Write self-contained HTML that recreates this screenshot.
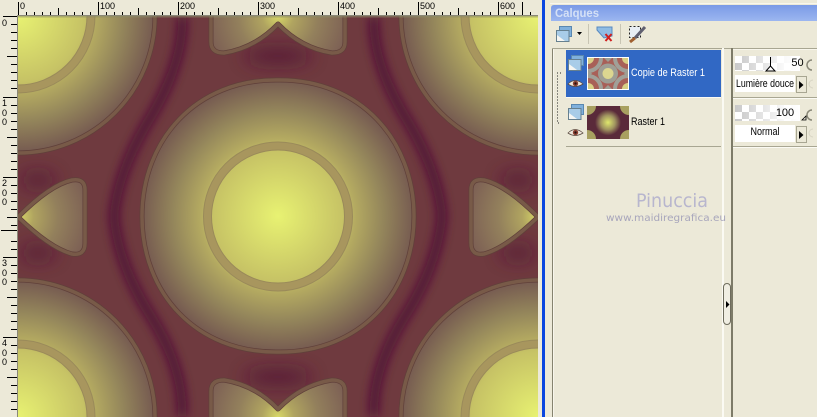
<!DOCTYPE html>
<html><head><meta charset="utf-8"><style>
html,body{margin:0;padding:0;background:#ece9d8;width:817px;height:417px;overflow:hidden}
svg{display:block;overflow:hidden}
text{font-family:"Liberation Sans",sans-serif}
.wm{font-family:"DejaVu Sans",sans-serif}
.c1{fill:none;stroke:#60403a;stroke-width:5;stroke-linejoin:round}
.c2{fill:none;stroke:#785a48;stroke-width:3.500;stroke-linejoin:round}
.r1{fill:none;stroke:#9a8a5a;stroke-width:9}
.r2{fill:none;stroke:#a8965e;stroke-width:7}
</style></head><body>
<svg width="817" height="417" viewBox="0 0 817 417" xmlns="http://www.w3.org/2000/svg">
<defs>
<clipPath id="cv"><rect x="18" y="16" width="520" height="401"/></clipPath>
<filter id="b6" x="-30%" y="-30%" width="160%" height="160%"><feGaussianBlur stdDeviation="5"/></filter>
<filter id="b10" x="-80%" y="-150%" width="260%" height="400%"><feGaussianBlur stdDeviation="9"/></filter>
<radialGradient id="gc" gradientUnits="userSpaceOnUse" cx="278" cy="216" r="138">
<stop offset="0" stop-color="#e8f272"/><stop offset=".48" stop-color="#c6c265"/><stop offset=".56" stop-color="#b4aa61"/><stop offset=".76" stop-color="#94865b"/><stop offset="1" stop-color="#745850"/></radialGradient>
<radialGradient id="g1" gradientUnits="userSpaceOnUse" cx="18" cy="16" r="138"><stop offset="0" stop-color="#e8f272"/><stop offset=".48" stop-color="#c6c265"/><stop offset=".56" stop-color="#b4aa61"/><stop offset=".76" stop-color="#94865b"/><stop offset="1" stop-color="#745850"/></radialGradient>
<radialGradient id="g2" gradientUnits="userSpaceOnUse" cx="538" cy="16" r="138"><stop offset="0" stop-color="#e8f272"/><stop offset=".48" stop-color="#c6c265"/><stop offset=".56" stop-color="#b4aa61"/><stop offset=".76" stop-color="#94865b"/><stop offset="1" stop-color="#745850"/></radialGradient>
<radialGradient id="g3" gradientUnits="userSpaceOnUse" cx="18" cy="417" r="138"><stop offset="0" stop-color="#e8f272"/><stop offset=".48" stop-color="#c6c265"/><stop offset=".56" stop-color="#b4aa61"/><stop offset=".76" stop-color="#94865b"/><stop offset="1" stop-color="#745850"/></radialGradient>
<radialGradient id="g4" gradientUnits="userSpaceOnUse" cx="538" cy="417" r="138"><stop offset="0" stop-color="#e8f272"/><stop offset=".48" stop-color="#c6c265"/><stop offset=".56" stop-color="#b4aa61"/><stop offset=".76" stop-color="#94865b"/><stop offset="1" stop-color="#745850"/></radialGradient>
<radialGradient id="gt" gradientUnits="userSpaceOnUse" cx="278" cy="16" r="72"><stop offset="0" stop-color="#d8d868"/><stop offset=".22" stop-color="#b0a460"/><stop offset=".55" stop-color="#93805c"/><stop offset="1" stop-color="#7c5f54"/></radialGradient>
<radialGradient id="gb" gradientUnits="userSpaceOnUse" cx="278" cy="417" r="72"><stop offset="0" stop-color="#d8d868"/><stop offset=".22" stop-color="#b0a460"/><stop offset=".55" stop-color="#93805c"/><stop offset="1" stop-color="#7c5f54"/></radialGradient>
<radialGradient id="gl" gradientUnits="userSpaceOnUse" cx="18" cy="216.500" r="72"><stop offset="0" stop-color="#d8d868"/><stop offset=".22" stop-color="#b0a460"/><stop offset=".55" stop-color="#93805c"/><stop offset="1" stop-color="#7c5f54"/></radialGradient>
<radialGradient id="gr" gradientUnits="userSpaceOnUse" cx="538" cy="216.500" r="72"><stop offset="0" stop-color="#d8d868"/><stop offset=".22" stop-color="#b0a460"/><stop offset=".55" stop-color="#93805c"/><stop offset="1" stop-color="#7c5f54"/></radialGradient>
<radialGradient id="t2c" cx=".5" cy=".5" r=".5"><stop offset="0" stop-color="#dfe86c"/><stop offset=".55" stop-color="#a09460"/><stop offset="1" stop-color="#5a2a3a"/></radialGradient>
<linearGradient id="tb" x1="0" y1="0" x2="0" y2="1"><stop offset="0" stop-color="#7a9ae6"/><stop offset="1" stop-color="#9cb6f0"/></linearGradient>
<pattern id="ck" width="14" height="14" patternUnits="userSpaceOnUse"><rect width="14" height="14" fill="#fff"/><rect width="7" height="7" fill="#c8c8c8"/><rect x="7" y="7" width="7" height="7" fill="#c8c8c8"/></pattern>
<linearGradient id="fade" x1="0" y1="0" x2="1" y2="0"><stop offset="0" stop-color="#fff" stop-opacity="0"/><stop offset=".75" stop-color="#fff" stop-opacity=".9"/><stop offset="1" stop-color="#fff"/></linearGradient>
<g id="layerico"><rect x="3.500" y=".5" width="12" height="10" fill="#7fb0dc" stroke="#5a88b0"/><rect x=".5" y="4.500" width="12.500" height="11" fill="#a8cce8" stroke="#66808f"/><path d="M1 9 L9 15 L1 15Z" fill="#f6f6f2"/></g>
<g id="eye"><path d="M0 4 Q7 -3 15 4 Q7 9 0 4Z" fill="#efe8dc" stroke="#5a4a40" stroke-width=".8"/><circle cx="7.500" cy="3.500" r="2.700" fill="#8a4030"/><circle cx="7.500" cy="3.500" r="1.100" fill="#201010"/></g>
<g id="arrow"><path d="M0 0 L4.500 4 L0 8Z" fill="#000"/></g>
</defs>

<!-- rulers -->
<rect width="817" height="417" fill="#ece9d8"/>
<g stroke="#000" stroke-width="1" shape-rendering="crispEdges">
<path d="M18.500 2V15M98.500 2V15M178.500 2V15M258.500 2V15M338.500 2V15M418.500 2V15M498.500 2V15M522.500 2V15"/>
<path d="M26.500 12V15M34.500 12V15M42.500 12V15M50.500 12V15M58.500 8V15M66.500 12V15M74.500 12V15M82.500 12V15M90.500 12V15M106.500 12V15M114.500 12V15M122.500 12V15M130.500 12V15M138.500 8V15M146.500 12V15M154.500 12V15M162.500 12V15M170.500 12V15M186.500 12V15M194.500 12V15M202.500 12V15M210.500 12V15M218.500 8V15M226.500 12V15M234.500 12V15M242.500 12V15M250.500 12V15M266.500 12V15M274.500 12V15M282.500 12V15M290.500 12V15M298.500 8V15M306.500 12V15M314.500 12V15M322.500 12V15M330.500 12V15M346.500 12V15M354.500 12V15M362.500 12V15M370.500 12V15M378.500 8V15M386.500 12V15M394.500 12V15M402.500 12V15M410.500 12V15M426.500 12V15M434.500 12V15M442.500 12V15M450.500 12V15M458.500 8V15M466.500 12V15M474.500 12V15M482.500 12V15M490.500 12V15M506.500 12V15M514.500 12V15M530.500 12V15"/>
<path d="M3 16.500H17M3 97.500H17M3 177.500H17M3 257.500H17M3 337.500H17M1 230.500H17"/>
<path d="M11 24.500H17M11 32.500H17M11 40.500H17M11 48.500H17M7 56.500H17M11 64.500H17M11 72.500H17M11 80.500H17M11 88.500H17M11 105.500H17M11 113.500H17M11 121.500H17M11 129.500H17M7 137.500H17M11 145.500H17M11 153.500H17M11 161.500H17M11 169.500H17M11 185.500H17M11 193.500H17M11 201.500H17M11 209.500H17M7 217.500H17M11 225.500H17M11 241.500H17M11 249.500H17M11 265.500H17M11 273.500H17M11 281.500H17M11 289.500H17M7 297.500H17M11 305.500H17M11 313.500H17M11 321.500H17M11 329.500H17M11 345.500H17M11 353.500H17M11 361.500H17M11 369.500H17M7 377.500H17M11 385.500H17M11 393.500H17M11 401.500H17M11 409.500H17"/>
</g>
<g font-size="9" fill="#000">
<text x="20" y="9">0</text><text x="100" y="9">100</text><text x="180" y="9">200</text><text x="260" y="9">300</text><text x="340" y="9">400</text><text x="420" y="9">500</text><text x="500" y="9">600</text>
<text x="2" y="26">0</text>
<text x="2" y="106">1</text><text x="2" y="116">0</text><text x="2" y="125">0</text>
<text x="2" y="186">2</text><text x="2" y="196">0</text><text x="2" y="205">0</text>
<text x="2" y="266">3</text><text x="2" y="276">0</text><text x="2" y="285">0</text>
<text x="2" y="346">4</text><text x="2" y="356">0</text><text x="2" y="365">0</text>
</g>
<rect x="17" y="15" width="521" height="1" fill="#8a8878"/><rect x="17" y="15" width="1" height="402" fill="#8a8878"/>

<!-- canvas -->
<g clip-path="url(#cv)">
<rect x="18" y="16" width="520" height="401" fill="#6f3a3f"/>
<g fill="none" stroke="#4e1034" stroke-width="9" filter="url(#b6)">
<path d="M182 17 Q184 60 152 115 Q118 170 114 216 Q118 265 152 318 Q184 370 182 416"/>
<path d="M374 17 Q372 60 404 115 Q438 170 442 216 Q438 265 404 318 Q372 370 374 416"/>
</g>
<g fill="#521636" filter="url(#b10)" opacity=".85">
<ellipse cx="278" cy="56" rx="34" ry="8"/><ellipse cx="278" cy="377" rx="34" ry="8"/>
<ellipse cx="38" cy="180" rx="18" ry="7"/><ellipse cx="38" cy="253" rx="18" ry="7"/>
<ellipse cx="518" cy="180" rx="18" ry="7"/><ellipse cx="518" cy="253" rx="18" ry="7"/>
</g>
<!-- centre -->
<path d="M278 80C360 79 414 140 414 216.500C414 293 360 353 278 352C196 353 142 293 142 216.500C142 140 196 79 278 80Z" fill="url(#gc)"/>
<path class="c1" d="M278 80C360 79 414 140 414 216.500C414 293 360 353 278 352C196 353 142 293 142 216.500C142 140 196 79 278 80Z"/>
<path class="c2" d="M278 80C360 79 414 140 414 216.500C414 293 360 353 278 352C196 353 142 293 142 216.500C142 140 196 79 278 80Z"/>
<!-- corners -->
<path d="M155 16A137 137 0 0 1 18 153L18 16Z" fill="url(#g1)"/>
<path d="M401 16A137 137 0 0 0 538 153L538 16Z" fill="url(#g2)"/>
<path d="M155 417A137 137 0 0 0 18 280L18 417Z" fill="url(#g3)"/>
<path d="M401 417A137 137 0 0 1 538 280L538 417Z" fill="url(#g4)"/>
<path class="c1" d="M155 16A137 137 0 0 1 18 153"/><path class="c1" d="M401 16A137 137 0 0 0 538 153"/><path class="c1" d="M155 417A137 137 0 0 0 18 280"/><path class="c1" d="M401 417A137 137 0 0 1 538 280"/>
<path class="c2" d="M155 16A137 137 0 0 1 18 153"/><path class="c2" d="M401 16A137 137 0 0 0 538 153"/><path class="c2" d="M155 417A137 137 0 0 0 18 280"/><path class="c2" d="M401 417A137 137 0 0 1 538 280"/>
<!-- top / bottom -->
<path d="M211 16L211 42Q211 53 224 53Q255 48 278 24Q301 48 332 53Q345 53 345 42L345 16Z" fill="url(#gt)"/>
<path class="c1" d="M211 16L211 42Q211 53 224 53Q255 48 278 24Q301 48 332 53Q345 53 345 42L345 16"/>
<path class="c2" d="M211 16L211 42Q211 53 224 53Q255 48 278 24Q301 48 332 53Q345 53 345 42L345 16"/>
<path d="M211 417L211 391Q211 380 224 380Q255 385 278 409Q301 385 332 380Q345 380 345 391L345 417Z" fill="url(#gb)"/>
<path class="c1" d="M211 417L211 391Q211 380 224 380Q255 385 278 409Q301 385 332 380Q345 380 345 391L345 417"/>
<path class="c2" d="M211 417L211 391Q211 380 224 380Q255 385 278 409Q301 385 332 380Q345 380 345 391L345 417"/>
<!-- left / right -->
<path d="M18 217Q50 185 72 180Q85 178 85 190L85 243Q85 256 72 254Q50 248 18 217Z" fill="url(#gl)"/>
<path class="c1" d="M18 217Q50 185 72 180Q85 178 85 190L85 243Q85 256 72 254Q50 248 18 217"/>
<path class="c2" d="M18 217Q50 185 72 180Q85 178 85 190L85 243Q85 256 72 254Q50 248 18 217"/>
<path d="M538 217Q506 185 484 180Q471 178 471 190L471 243Q471 256 484 254Q506 248 538 217Z" fill="url(#gr)"/>
<path class="c1" d="M538 217Q506 185 484 180Q471 178 471 190L471 243Q471 256 484 254Q506 248 538 217"/>
<path class="c2" d="M538 217Q506 185 484 180Q471 178 471 190L471 243Q471 256 484 254Q506 248 538 217"/>
<!-- rings -->
<circle class="r1" cx="278" cy="216.500" r="70.500"/><circle class="r2" cx="278" cy="216.500" r="70.500"/>
<path class="r1" d="M91 16A73 73 0 0 1 18 89"/><path class="r2" d="M91 16A73 73 0 0 1 18 89"/>
<path class="r1" d="M465 16A73 73 0 0 0 538 89"/><path class="r2" d="M465 16A73 73 0 0 0 538 89"/>
<path class="r1" d="M91 417A73 73 0 0 0 18 344"/><path class="r2" d="M91 417A73 73 0 0 0 18 344"/>
<path class="r1" d="M465 417A73 73 0 0 1 538 344"/><path class="r2" d="M465 417A73 73 0 0 1 538 344"/>
<rect x="18" y="16" width="520" height="1.500" fill="#8a8a68" opacity=".55"/>
</g>

<!-- right side -->
<rect x="538" y="0" width="4" height="417" fill="#ece9d8"/>
<rect x="542" y="0" width="3" height="417" fill="#0a46e0"/>
<rect x="545" y="0" width="272" height="417" fill="#ece9d8"/>
<rect x="550" y="3" width="267" height="1" fill="#f8f6ec"/>
<path d="M551 21V8Q551 5 554 5H817V21Z" fill="url(#tb)"/>
<text x="555" y="17" font-size="11.500" font-weight="bold" fill="#d4e0f6" textLength="44" lengthAdjust="spacingAndGlyphs">Calques</text>

<!-- toolbar -->
<use href="#layerico" x="556" y="26"/>
<path d="M577 32h5l-2.500 3z" fill="#000"/>
<rect x="588" y="24" width="1" height="20" fill="#c8c5b4"/>
<rect x="620" y="24" width="1" height="20" fill="#c8c5b4"/>
<path d="M597 27H612V36L604 38L597 30Z" fill="#8fbce4" stroke="#5a8ac0"/>
<path d="M605.500 34L611.500 41M611.500 34L605.500 41" stroke="#d02020" stroke-width="2"/>
<rect x="629.500" y="26.500" width="11" height="11" fill="#e8eef4" stroke="#222" stroke-dasharray="2 2"/>
<path d="M645 27L635 38" stroke="#606070" stroke-width="3"/><path d="M635 38L630 42" stroke="#a06030" stroke-width="3"/>

<!-- panels -->
<rect x="552" y="48" width="1" height="369" fill="#85836f"/>
<rect x="553" y="48" width="1" height="369" fill="#f8f6ec"/>
<rect x="552" y="48" width="180" height="1" fill="#a8a692"/>
<rect x="722" y="48" width="2" height="369" fill="#fbfaf3"/>
<rect x="731" y="48" width="2" height="369" fill="#7d7b68"/>
<rect x="733" y="48" width="84" height="1" fill="#a8a692"/>
<rect x="733" y="49" width="84" height="1" fill="#f8f6ec"/>
<rect x="733" y="97" width="84" height="1" fill="#a8a692"/><rect x="733" y="98" width="84" height="1" fill="#fbfaf3"/>
<rect x="733" y="146" width="84" height="1" fill="#a8a692"/><rect x="733" y="147" width="84" height="1" fill="#fbfaf3"/>

<!-- layer 1 -->
<rect x="566" y="50" width="155" height="47" fill="#3168c4"/>
<rect x="566" y="97" width="155" height="1" fill="#fbfaf3"/>
<use href="#layerico" x="568" y="55"/>
<use href="#eye" x="568" y="80"/>
<rect x="587" y="57" width="42" height="33" fill="#fff"/>
<svg x="588" y="58" width="40" height="31" viewBox="0 0 40 31">
<rect width="40" height="31" fill="#a86058"/>
<g fill="#d8cf86"><circle cx="0" cy="0" r="6"/><circle cx="40" cy="0" r="6"/><circle cx="0" cy="31" r="6"/><circle cx="40" cy="31" r="6"/></g>
<g fill="none" stroke="#a0a098" stroke-width="4"><circle cx="0" cy="0" r="13"/><circle cx="40" cy="0" r="13"/><circle cx="0" cy="31" r="13"/><circle cx="40" cy="31" r="13"/></g>
<circle cx="20" cy="15.500" r="10" fill="#9e9e94"/><circle cx="20" cy="15.500" r="5.500" fill="#dcd690"/>
<path d="M16 0H24L20 4ZM16 31H24L20 27ZM0 12V19L4 15.500ZM40 12V19L36 15.500Z" fill="#9e9e94"/>
</svg>
<text x="631" y="76" font-size="11" fill="#fff" textLength="74" lengthAdjust="spacingAndGlyphs">Copie de Raster 1</text>

<!-- layer 2 -->
<rect x="566" y="146" width="155" height="1" fill="#a8a692"/>
<use href="#layerico" x="568" y="104"/>
<use href="#eye" x="568" y="129"/>
<svg x="587" y="106" width="42" height="33" viewBox="0 0 42 33">
<rect width="42" height="33" fill="#5a2a3a"/>
<g fill="#a8a060"><circle cx="0" cy="0" r="9"/><circle cx="42" cy="0" r="9"/><circle cx="0" cy="33" r="9"/><circle cx="42" cy="33" r="9"/></g>
<circle cx="21" cy="16.500" r="13" fill="url(#t2c)"/>
</svg>
<text x="631" y="125" font-size="11" fill="#000" textLength="34" lengthAdjust="spacingAndGlyphs">Raster 1</text>

<!-- group bracket -->
<path d="M561 73H557.500V123H561" fill="none" stroke="#222" stroke-dasharray="1 2"/>

<!-- controls -->
<rect x="735" y="56" width="65" height="15" fill="url(#ck)"/><rect x="735" y="56" width="65" height="15" fill="url(#fade)"/>
<path d="M770.500 57V66" stroke="#000"/><path d="M770.500 66L766 71H775Z" fill="#fff" stroke="#000"/>
<text x="797.500" y="66" font-size="11" text-anchor="middle" fill="#000">50</text>
<rect x="735" y="75" width="60" height="17" fill="#fff"/>
<text x="736" y="87" font-size="11" fill="#000" textLength="58" lengthAdjust="spacingAndGlyphs">Lumière douce</text>
<rect x="796.500" y="76.500" width="10" height="16" fill="#ece9d8" stroke="#a8a692"/><use href="#arrow" x="799" y="81"/>
<rect x="735" y="105" width="65" height="16" fill="url(#ck)"/><rect x="735" y="105" width="65" height="16" fill="url(#fade)"/>
<text x="785" y="116" font-size="11" text-anchor="middle" fill="#000">100</text>
<path d="M802 120L806 116V120Z" fill="none" stroke="#000" stroke-width=".8"/>
<rect x="735" y="125" width="60" height="17" fill="#fff"/>
<text x="765" y="135" font-size="11" text-anchor="middle" fill="#000" textLength="29" lengthAdjust="spacingAndGlyphs">Normal</text>
<rect x="796.500" y="126.500" width="10" height="16" fill="#ece9d8" stroke="#a8a692"/><use href="#arrow" x="799" y="131"/>
<g fill="none" stroke="#8a8878" stroke-width="1.500"><path d="M812 70A5 5 0 0 1 812 60"/><path d="M812 120A5 5 0 0 1 812 110"/></g>
<g fill="none" stroke="#d8d5c4"><path d="M813 88A4 4 0 0 1 813 80"/><path d="M813 137A4 4 0 0 1 813 129"/></g>

<!-- watermark -->
<text class="wm" x="636" y="207" font-size="19" fill="#b8b6ce" textLength="72" lengthAdjust="spacingAndGlyphs">Pinuccia</text>
<text class="wm" x="606" y="221" font-size="10" fill="#a8a6bc" textLength="120" lengthAdjust="spacingAndGlyphs">www.maidiregrafica.eu</text>

<!-- splitter -->
<rect x="723.500" y="283.500" width="7" height="41" rx="3.500" fill="#f0eee2" stroke="#6e6c5c"/>
<path d="M726 301L729.500 304.500L726 308Z" fill="#000"/>
</svg>
</body></html>
